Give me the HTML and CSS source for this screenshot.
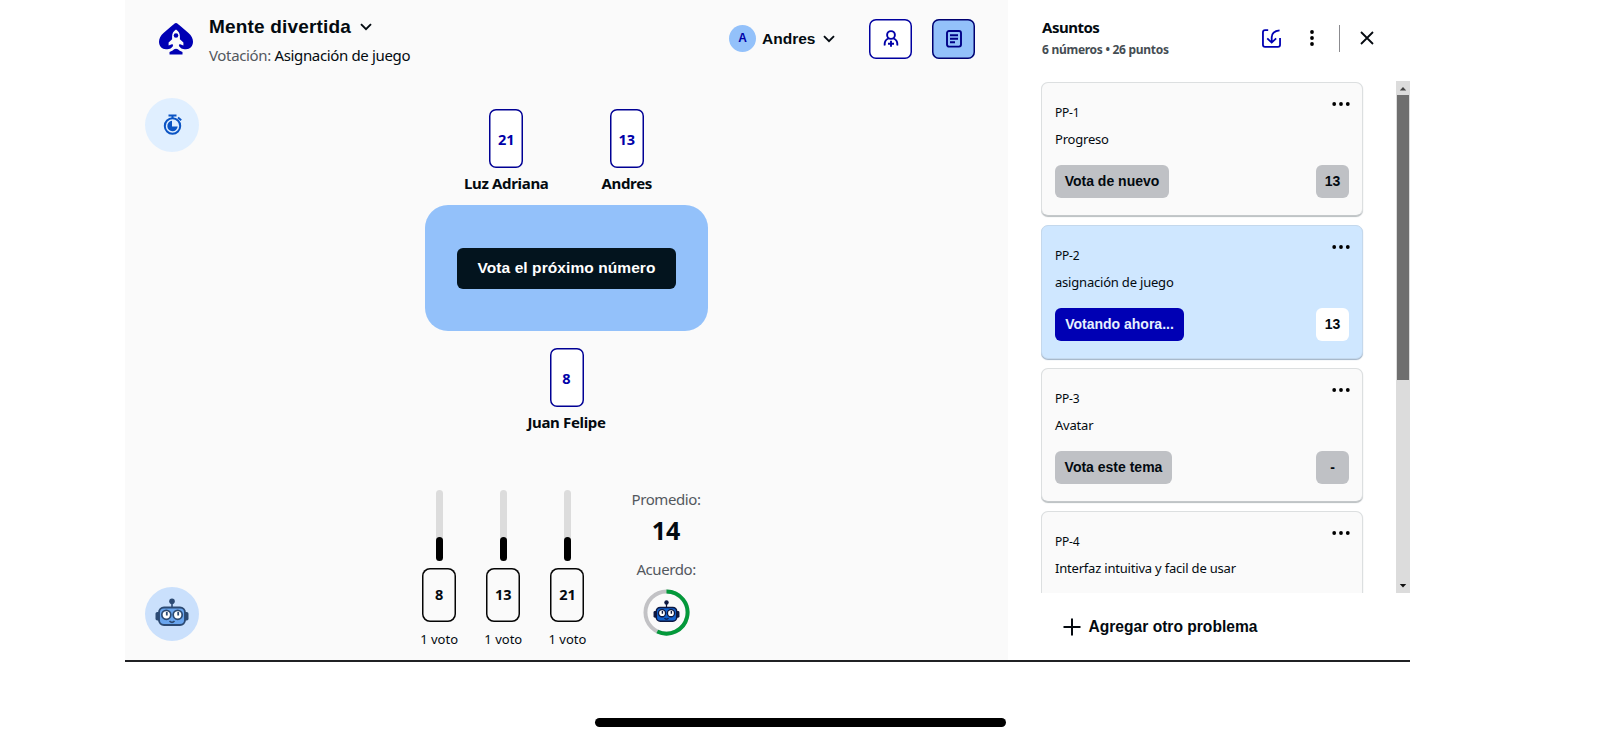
FILE: index.html
```html
<!DOCTYPE html>
<html lang="es">
<head>
<meta charset="utf-8">
<title>Mente divertida</title>
<link rel="stylesheet" href="styles.css">
</head>
<body>
<svg class="defs" width="0" height="0">
  <symbol id="chevron" viewBox="0 0 12 8"><path d="M1 1.2l5 5 5-5" fill="none" stroke="currentColor" stroke-width="1.9"/></symbol>
  <symbol id="more" viewBox="0 0 18 4"><circle cx="2.2" cy="2" r="1.9"/><circle cx="9" cy="2" r="1.9"/><circle cx="15.8" cy="2" r="1.9"/></symbol>
  <symbol id="robot" viewBox="0 0 34 28">
    <path d="M17 4v6" stroke="var(--line)" stroke-width="1.6"/>
    <circle cx="17" cy="3.2" r="2.8" fill="var(--line)"/>
    <rect x=".5" y="14" width="5" height="8.500" rx="1.800" fill="var(--line)"/>
    <rect x="28.500" y="14" width="5" height="8.500" rx="1.800" fill="var(--line)"/>
    <rect x="4" y="9.500" width="26" height="17.500" rx="5" fill="var(--face)" stroke="var(--line)" stroke-width="1.900"/>
    <circle cx="11.300" cy="16.800" r="4.500" fill="#fff" stroke="var(--line)" stroke-width="1.700"/>
    <circle cx="22.700" cy="16.800" r="4.500" fill="#fff" stroke="var(--line)" stroke-width="1.700"/>
    <path d="M11.800 14v3.500M23.200 14v3.500" stroke="var(--line)" stroke-width="1.800"/>
    <path d="M14.500 23q2.500 2.800 5 0" fill="none" stroke="var(--line)" stroke-width="1.600"/>
  </symbol>
</svg>
<div class="app">
  <main class="board">
    <header class="topbar">
      <svg class="logo" viewBox="0 0 34 32">
        <path fill="#0000b4" d="M17 0C18.300 0 19 1 20.500 2.300L29.500 10C32.500 12.800 34 15.500 34 18.800C34 23.300 31 26.300 27 26.300C25 26.300 23.500 26 22 25.200L19.500 22.500H14.500L12 25.200C10.500 26 9 26.300 7 26.300C3 26.300 0 23.300 0 18.800C0 15.500 1.500 12.800 4.500 10L13.500 2.300C15 1 15.700 0 17 0Z"/>
        <path fill="#fafafa" d="M17 6.500c2.800 1.800 3.900 4.200 3.900 6.800v2.900l3.500 3.300v3l-3.900-1.500c-.2 1.900-1.500 3.200-3.500 4.600c-2-1.400-3.300-2.700-3.500-4.600l-3.900 1.500v-3l3.500-3.300v-2.900c0-2.600 1.100-5 3.900-6.800z"/>
        <circle cx="17" cy="12.500" r="2.300" fill="#0000b4"/>
        <path fill="#0000b4" d="M10.500 31.500v-2.500l3.200-1.500q1.100-1.800 3.300-1.800t3.300 1.800l3.200 1.500v2.500z"/>
      </svg>
      <div class="heading">
        <h1 class="title"><span>Mente divertida</span><svg class="chev"><use href="#chevron"/></svg></h1>
        <p class="subtitle"><span class="muted">Votación:</span> <span class="subject">Asignación de juego</span></p>
      </div>
      <div class="user"><span class="avatar">A</span><span class="username">Andres</span><svg class="chev"><use href="#chevron"/></svg></div>
      <button class="tool"><svg width="16" height="18" viewBox="0 0 16 18" fill="none" stroke="#0000a8" stroke-width="1.900"><circle cx="8" cy="5" r="3.900"/><path d="M1.800 15.500c-.5-2.800.9-5.800 3.700-7M14.200 15.500c.5-2.800-.9-5.800-3.700-7M8 10.800v6M5 13.800h6"/></svg></button>
      <button class="tool tool-on"><svg width="16" height="18" viewBox="0 0 16 18" fill="none" stroke="#000087" stroke-width="1.900"><rect x="1" y="1" width="14" height="15.600" rx="2"/><path d="M4 5.300h8M4 8.800h8M4 12.300h5"/></svg></button>
    </header>

    <button class="fab fab-timer"><svg width="20" height="21" viewBox="0 0 20 21" fill="none" stroke="#0b54c4" stroke-width="2"><circle cx="9.500" cy="12" r="7.700"/><path d="M5.500 1.500h8M9.500 2v2.500M15 3.500l3.200 2.700"/><path d="M9 6.800v5.700h5.700a5.200 5.200 0 1 1-5.700-5.700z" fill="#0b54c4" stroke="none"/></svg></button>

    <section class="table-area">
      <div class="seats">
        <div class="seat"><span class="vote">21</span><span class="name">Luz Adriana</span></div>
        <div class="seat"><span class="vote">13</span><span class="name">Andres</span></div>
      </div>
      <div class="table"><button class="next">Vota el próximo número</button></div>
      <div class="seat seat-bottom"><span class="vote">8</span><span class="name">Juan Felipe</span></div>
    </section>

    <section class="results">
      <div class="tally"><span class="meter"><i class="fill"></i></span><span class="tcard">8</span><span class="count">1 voto</span></div>
      <div class="tally"><span class="meter"><i class="fill"></i></span><span class="tcard">13</span><span class="count">1 voto</span></div>
      <div class="tally"><span class="meter"><i class="fill"></i></span><span class="tcard">21</span><span class="count">1 voto</span></div>
      <div class="summary">
        <span class="label">Promedio:</span>
        <strong class="average">14</strong>
        <span class="label">Acuerdo:</span>
        <div class="ring">
          <svg class="ring-arc" viewBox="0 0 48 48" fill="none" stroke-width="4"><circle cx="24" cy="24" r="21.500" stroke="#c2c2c5"/><path d="M24 2.500a21.500 21.500 0 1 1-9.400 40.840" stroke="#03993a"/></svg>
          <svg class="ring-bot"><use href="#robot"/></svg>
        </div>
      </div>
    </section>

    <button class="fab fab-bot"><svg class="bot"><use href="#robot"/></svg></button>
  </main>

  <aside class="panel">
    <header class="panel-head">
      <div class="panel-titles"><h2 class="panel-title">Asuntos</h2><p class="panel-sub">6 números • 26 puntos</p></div>
      <svg class="import" viewBox="0 0 20 20" fill="none" stroke="#0000b4" stroke-width="1.900"><path d="M6.500 1.200H3.200Q1 1.200 1 3.400V16.600Q1 18.800 3.200 18.800H16.800Q19 18.800 19 16.600V9.500"/><path d="M18.500 1.500C13 2 10.200 5 10.200 9V14M5.500 9.800l4.700 4.500 4.700-4.500"/></svg>
      <svg class="kebab" viewBox="0 0 4 16"><circle cx="2" cy="2" r="1.900"/><circle cx="2" cy="8" r="1.900"/><circle cx="2" cy="14" r="1.900"/></svg>
      <span class="rule"></span>
      <svg class="close" viewBox="0 0 14 14"><path d="M1 1l12 12M13 1L1 13" stroke="#050a10" stroke-width="1.800"/></svg>
    </header>
    <div class="scroller">
      <div class="list">
        <article class="issue">
          <div class="issue-top"><span class="key">PP-1</span><svg class="dots"><use href="#more"/></svg></div>
          <p class="desc">Progreso</p>
          <div class="issue-foot"><button class="act act-again">Vota de nuevo</button><span class="score">13</span></div>
        </article>
        <article class="issue issue-active">
          <div class="issue-top"><span class="key">PP-2</span><svg class="dots"><use href="#more"/></svg></div>
          <p class="desc">asignación de juego</p>
          <div class="issue-foot"><button class="act act-now">Votando ahora...</button><span class="score">13</span></div>
        </article>
        <article class="issue">
          <div class="issue-top"><span class="key">PP-3</span><svg class="dots"><use href="#more"/></svg></div>
          <p class="desc">Avatar</p>
          <div class="issue-foot"><button class="act act-this">Vota este tema</button><span class="score">-</span></div>
        </article>
        <article class="issue">
          <div class="issue-top"><span class="key">PP-4</span><svg class="dots"><use href="#more"/></svg></div>
          <p class="desc">Interfaz intuitiva y facil de usar</p>
        </article>
      </div>
      <div class="scrollbar">
        <svg class="arrow" viewBox="0 0 14 14"><path d="M3.800 9.500h6.400L7 6z" fill="#444"/></svg>
        <span class="thumb"></span>
        <svg class="arrow arrow-down" viewBox="0 0 14 14"><path d="M3.800 5h6.400L7 8.500z" fill="#111"/></svg>
      </div>
    </div>
    <button class="add"><svg width="18" height="18" viewBox="0 0 18 18"><path d="M9 .5v17M.5 9h17" stroke="#050a10" stroke-width="2"/></svg><span>Agregar otro problema</span></button>
  </aside>
</div>
<div class="home-bar"></div>
</body>
</html>
```
FILE: styles.css
```css
* { box-sizing: border-box; margin: 0; padding: 0; }
body {
  height: 740px;
  overflow: hidden;
  background: #fff;
  color: #030a10;
  font-family: "Noto Sans", "Open Sans", sans-serif;
}
button { border: 0; background: none; font-family: "Liberation Sans", Arial, sans-serif; font-weight: 700; color: inherit; }
svg { display: block; flex: none; }
.defs { position: absolute; }

.app { display: flex; width: 1285px; height: 662px; margin-left: 125px; border-bottom: 2px solid #202124; }
.board { position: relative; width: 883px; background: #fafafa; display: flex; flex-direction: column; }

.topbar { display: flex; align-items: flex-start; height: 109px; padding: 19px 33px 0; }
.logo { width: 34px; height: 32px; margin: 4px 0 0 .5px; }
.heading { width: 520px; margin-left: 16.500px; }
.title { display: flex; align-items: center; gap: 9px; height: 16px; font: 700 19px/16px "Liberation Sans", Arial, sans-serif; letter-spacing: .18px; }
.chev { width: 12px; height: 8px; }
.title .chev { margin-top: -1px; }
.subtitle { margin-top: 9px; font-size: 15px; line-height: 22px; letter-spacing: -.35px; white-space: nowrap; }
.muted, .label { color: #53585e; }
.user { display: flex; align-items: center; width: 140px; height: 39px; font: 700 15.500px/20px "Liberation Sans", Arial, sans-serif; }
.avatar { width: 27px; height: 27px; margin-right: 6px; border-radius: 50%; background: #93c1fa; color: #0000a8; font-size: 12px; line-height: 27px; text-align: center; }
.username { margin-right: 8px; }
.tool { display: flex; align-items: center; justify-content: center; flex: none; width: 43px; height: 40px; border-radius: 7px; background: #fff; box-shadow: inset 0 0 0 1.500px #0000a0; }
.tool-on { margin-left: 20px; background: #93c1fa; box-shadow: inset 0 0 0 1.500px #000070; }

.fab { position: absolute; display: flex; align-items: center; justify-content: center; width: 54px; height: 54px; border-radius: 50%; }
.fab-timer { left: 20px; top: 97.500px; padding-left: 2px; background: #e0efff; }
.fab-bot { left: 19.500px; top: 587px; background: #cae0fc; --line: #2c4a73; --face: #69a5ee; }
.bot { width: 34px; height: 28px; margin-top: -4px; }

.table-area { display: flex; flex-direction: column; align-items: center; width: 283px; height: 381px; margin-left: 300px; }
.seats { display: flex; justify-content: center; height: 96px; }
.seat { display: flex; flex-direction: column; align-items: center; width: 120.500px; }
.seat-bottom { margin-top: 17px; }
.vote { width: 34px; height: 59px; border-radius: 7px; background: #fff; box-shadow: inset 0 0 0 1.500px #000094; color: #0000a8; font-weight: 700; font-size: 14.500px; line-height: 60px; text-align: center; }
.name { margin-top: 4px; font-weight: 700; font-size: 15px; line-height: 22px; letter-spacing: -.35px; white-space: nowrap; }
.table { display: flex; align-items: center; justify-content: center; width: 283px; height: 126px; border-radius: 23px; background: #93c1fa; }
.next { width: 219px; height: 41px; border-radius: 6px; background: #03141e; color: #fff; font-size: 15.500px; letter-spacing: .08px; }

.results { display: flex; margin-left: 282px; height: 170px; }
.tally { display: flex; flex-direction: column; align-items: center; width: 64.200px; }
.meter { display: flex; align-items: flex-end; width: 7px; height: 71px; border-radius: 4px; background: #dcdcdc; }
.fill { width: 7px; height: 24px; border-radius: 4px; background: #000; }
.tcard { width: 34px; height: 54px; margin-top: 7px; border-radius: 8px; box-shadow: inset 0 0 0 1.500px #050505; font-weight: 700; font-size: 14.500px; line-height: 53px; text-align: center; }
.count { margin-top: 8px; font-size: 13px; line-height: 18px; white-space: nowrap; }
.summary { display: flex; flex-direction: column; align-items: center; width: 80px; margin-left: 26.500px; }
.label { margin-top: -2px; font-size: 15px; line-height: 22px; letter-spacing: -.42px; }
.average { font-size: 25px; line-height: 34px; margin: 3px 0 13px; }
.ring { display: grid; place-items: center; width: 47px; height: 47px; margin-top: 9px; --line: #0c1740; --face: #1262cf; }
.ring-arc, .ring-bot { grid-area: 1 / 1; }
.ring-arc { width: 47px; height: 47px; }
.ring-bot { width: 27px; height: 22px; margin-top: -3px; }

.panel { display: flex; flex-direction: column; width: 402px; padding-left: 33px; }
.panel-head { display: flex; align-items: center; height: 81px; padding: 0 0 4px; }
.panel-titles { width: 221px; margin-left: 1px; padding-top: 2px; }
.panel-title { font-size: 15px; line-height: 21px; letter-spacing: -.5px; }
.panel-sub { font-size: 12px; line-height: 23px; font-weight: 700; color: #454d53; letter-spacing: -.28px; white-space: nowrap; }
.import { width: 19px; height: 19px; margin-left: -1px; }
.kebab { width: 4px; height: 16px; margin-left: 28.500px; }
.rule { width: 1.500px; height: 27px; margin-left: 25px; background: #8b8b8f; }
.close { width: 14px; height: 14px; margin-left: 19.500px; }

.scroller { display: flex; justify-content: space-between; height: 513px; overflow: hidden; }
.list { display: flex; flex-direction: column; gap: 9.200px; padding-top: 1px; }
.issue { flex: none; width: 322px; height: 134px; padding: 13px 12px 0 13px; border: 1px solid #dcdfe0; border-bottom-color: #c4c8ca; border-radius: 7px; background: #fafafa; box-shadow: 0 1px 1px #b9bec0; }
.issue-active { background: #cfe7ff; border-color: #c4d8ec; box-shadow: 0 1px 1px #9fb2c6; }
.issue-top { display: flex; justify-content: space-between; height: 28px; }
.key { padding-top: 8px; font-size: 12px; line-height: 18px; letter-spacing: -.2px; }
.dots { width: 18px; height: 4px; margin-top: 6px; }
.desc { margin-top: 5px; font-size: 13px; line-height: 20px; letter-spacing: -.2px; white-space: nowrap; }
.issue-foot { display: flex; justify-content: space-between; margin: 16px 1px 0 0; }
.act, .score { height: 33px; border-radius: 6px; background: #bfc1c5; font: 700 14px/33px "Liberation Sans", Arial, sans-serif; text-align: center; }
.score { width: 33px; }
.act-again { width: 114px; }
.act-now { width: 129px; background: #0000b4; color: #e6f1ff; }
.act-this { width: 117px; }
.issue-active .score { background: #fff; }
.scrollbar { width: 14px; background: #dcdcdc; display: flex; flex-direction: column; align-items: center; }
.arrow { width: 14px; height: 14px; }
.arrow-down { margin-top: auto; }
.thumb { width: 12px; height: 285px; background: #6f6f6f; }

.add { display: flex; align-items: center; align-self: flex-start; gap: 7.500px; height: 67px; margin-left: 22px; font-size: 15.600px; white-space: nowrap; }
.home-bar { width: 411px; height: 9px; margin: 55.500px 0 0 595px; border-radius: 5px; background: #000; }
```
